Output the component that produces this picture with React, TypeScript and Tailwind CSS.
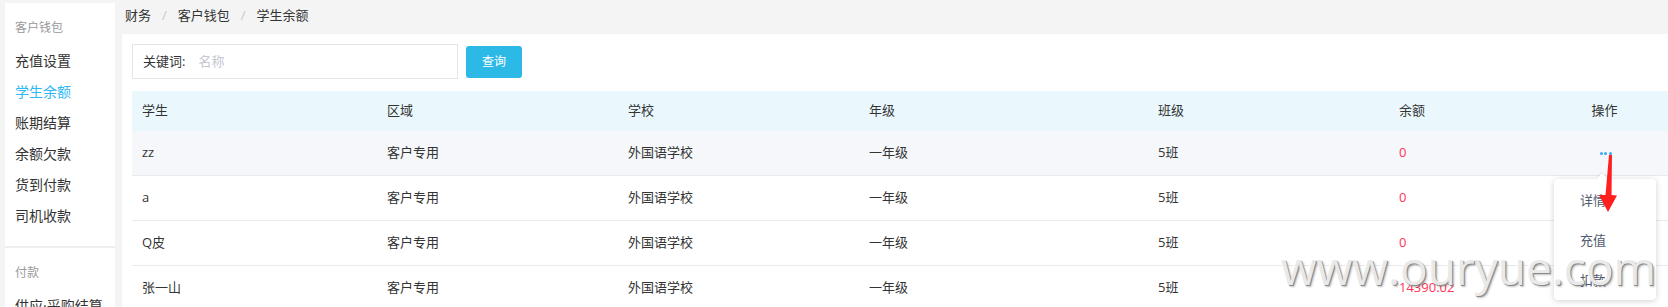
import React from "react";

const FONT = { fontFamily: '"Open Sans", "Noto Sans CJK SC", sans-serif' };

const cols = "grid-cols-[245px_241px_241px_289px_241px_152px_1fr]";

const rows = [
  { name: "zz", bal: "0", hover: true },
  { name: "a", bal: "0" },
  { name: "Q皮", bal: "0" },
  { name: "张一山", bal: "14390.02" },
];

function SideItem({ label, active }: { label: string; active?: boolean }) {
  return (
    <div className={`h-[31px] leading-[31px] text-[14px] whitespace-nowrap ${active ? "text-[#2db7f5]" : "text-[#333]"}`}>{label}</div>
  );
}

export default function App() {
  return (
    <div className="relative w-[1668px] h-[307px] overflow-hidden bg-[#f4f4f4] flex" style={FONT}>
      {/* Sidebar */}
      <div className="ml-[5px] mt-[3px] w-[110px] shrink-0 bg-white self-start">
        <div className="px-[10px] pt-[15px] pb-[15px]">
          <div className="h-[20px] leading-[20px] text-[12px] text-[#999]">客户钱包</div>
          <div className="mt-[7px]">
            <SideItem label="充值设置" />
            <SideItem label="学生余额" active />
            <SideItem label="账期结算" />
            <SideItem label="余额欠款" />
            <SideItem label="货到付款" />
            <SideItem label="司机收款" />
          </div>
        </div>
        <div className="h-[2px] bg-[#eeeeee]" />
        <div className="px-[10px] pt-[15px]">
          <div className="h-[20px] leading-[20px] text-[12px] text-[#999]">付款</div>
          <div className="mt-[7px]">
            <SideItem label="供应·采购结算" />
          </div>
        </div>
      </div>

      {/* Main */}
      <div className="ml-[7px] flex-1 flex flex-col min-w-0">
        <div className="h-[34px] shrink-0 pb-[2px] pl-[3px] flex items-center text-[13px] text-[#333]">
          <span>财务</span>
          <span className="mx-[11px] text-[#c5c8ce]">/</span>
          <span>客户钱包</span>
          <span className="mx-[11px] text-[#c5c8ce]">/</span>
          <span>学生余额</span>
        </div>
        <div className="flex-1 shrink-0 bg-white pl-[10px] pt-[10px]">
          <div className="flex items-center">
            <div className="w-[326px] h-[35px] shrink-0 border border-[#e3e5e8] flex items-center pl-[10px] text-[13px]">
              <span className="text-[#333]">关键词:</span>
              <span className="ml-[13px] text-[#c5c8ce]">名称</span>
            </div>
            <button className="ml-[8px] w-[56px] h-[32px] rounded-[3px] bg-[#2db9e6] text-white text-[12px]">查询</button>
          </div>
          <div className="mt-[12px] text-[13px] text-[#333]">
            <div className={`grid ${cols} h-[40px] items-center bg-[#eaf8fd]`}>
              <div className="pl-[10px]">学生</div>
              <div className="pl-[10px]">区域</div>
              <div className="pl-[10px]">学校</div>
              <div className="pl-[10px]">年级</div>
              <div className="pl-[10px]">班级</div>
              <div className="pl-[10px]">余额</div>
              <div className="text-center">操作</div>
            </div>
            {rows.map((r, i) => (
              <div
                key={i}
                className={`grid ${cols} h-[45px] items-center border-b border-[#e8eaec] ${r.hover ? "bg-[#f5f7fa]" : "bg-white"}`}
              >
                <div className="pl-[10px]">{r.name}</div>
                <div className="pl-[10px]">客户专用</div>
                <div className="pl-[10px]">外国语学校</div>
                <div className="pl-[10px]">一年级</div>
                <div className="pl-[10px]">5班</div>
                <div className="pl-[10px] text-[#ff3355]">{r.bal}</div>
                <div className="flex justify-center">
                  {r.hover && (
                    <div className="flex gap-[1.5px] ml-[2px]">
                      <span className="w-[3px] h-[3px] rounded-full bg-[#3aa8ef]" />
                      <span className="w-[3px] h-[3px] rounded-full bg-[#3aa8ef]" />
                      <span className="w-[3px] h-[3px] rounded-full bg-[#3aa8ef]" />
                    </div>
                  )}
                </div>
              </div>
            ))}
          </div>
        </div>
      </div>

      {/* Dropdown popover */}
      <div className="absolute left-[1554px] top-[179px] w-[102px] h-[121px] bg-white rounded-[4px] shadow-[0_1px_6px_rgba(0,0,0,0.18)] text-[13px] text-[#515a6e]">
        <div className="absolute left-[44px] -top-[4px] w-[8px] h-[8px] bg-white rotate-45 shadow-[-1px_-1px_2px_rgba(0,0,0,0.08)]" />
        <div className="relative pt-[1px] pl-[26px]">
          <div className="h-[40px] leading-[40px]">详情</div>
          <div className="h-[40px] leading-[40px]">充值</div>
          <div className="h-[40px] leading-[40px]">扣款</div>
        </div>
      </div>

      {/* Watermark */}
      <div
        className="absolute left-[1281px] top-[244px] text-[46px] leading-[46px] text-[#e9e9e9] whitespace-nowrap pointer-events-none"
        style={{ fontFamily: '"Open Sans", sans-serif', textShadow: "1px 1px 0 #8a8a8a, 2px 2px 2px rgba(0,0,0,0.25), -1px -1px 0 #ffffff" }}
      >
        www.ouryue.com
      </div>

      {/* Red annotation arrow */}
      <svg className="absolute left-0 top-0 pointer-events-none" width="1668" height="307">
        <polygon points="1609,155 1612,155 1611.5,195 1617,195.5 1608,212 1599,195 1605.5,195" fill="#ff1f1f" />
      </svg>
    </div>
  );
}
